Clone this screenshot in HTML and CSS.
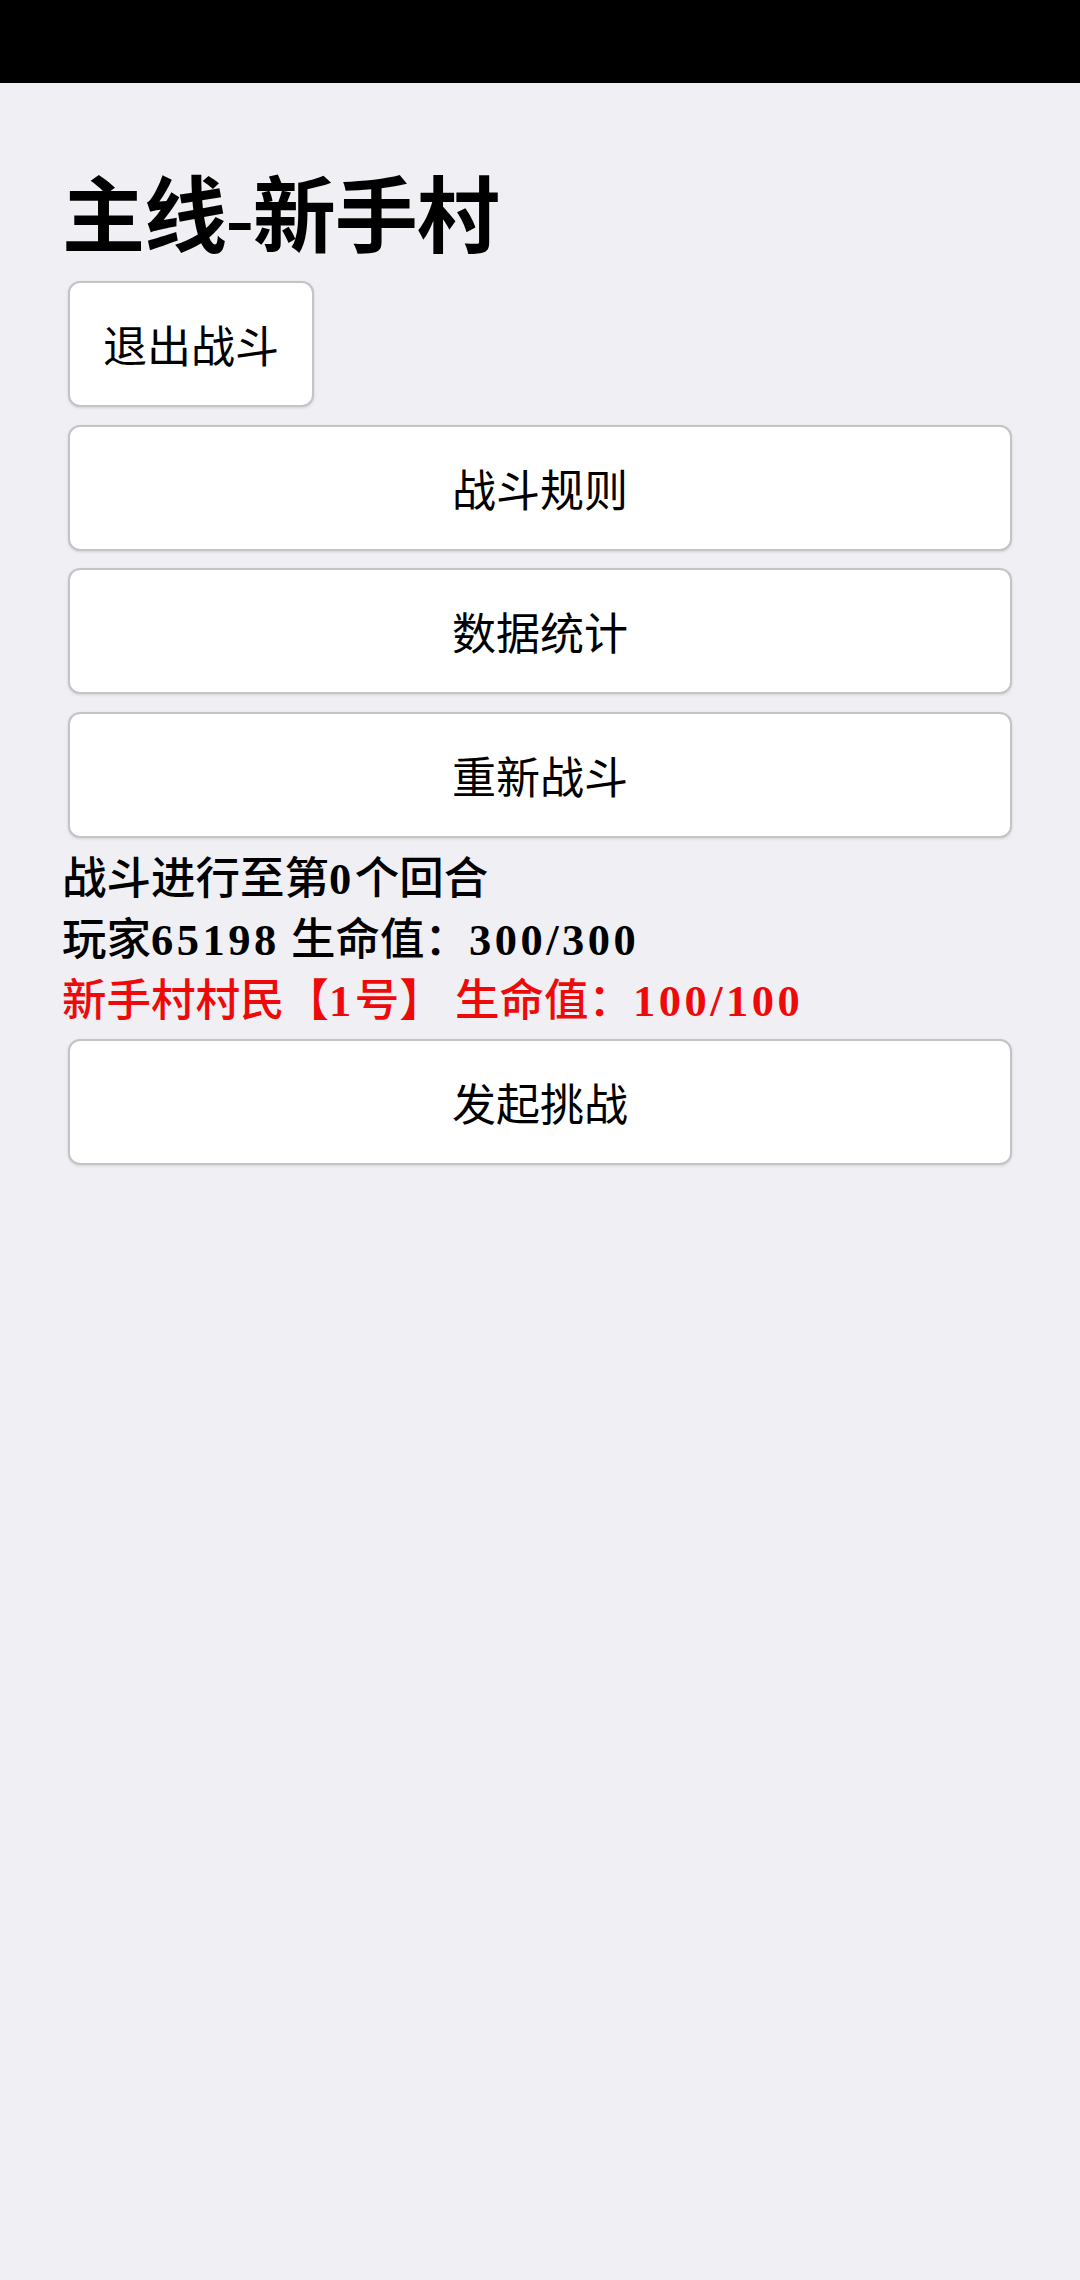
FILE: index.html
```html
<!DOCTYPE html>
<html lang="zh-CN">
<head>
<meta charset="utf-8">
<title>主线-新手村</title>
<link rel="stylesheet" href="styles.css">
</head>
<body>
<div class="statusbar"></div>
<main class="page">
  <h1 class="title">主线-新手村</h1>
  <div class="stack">
    <button class="btn btn-small">退出战斗</button>
    <button class="btn btn-wide">战斗规则</button>
    <button class="btn btn-wide">数据统计</button>
    <button class="btn btn-wide">重新战斗</button>
  </div>
  <div class="info">
    <div class="line">战斗进行至第<span class="num">0</span>个回合</div>
    <div class="line">玩家<span class="num">65198</span> 生命值：<span class="num">300/300</span></div>
    <div class="line enemy">新手村村民【<span class="num">1</span>号】 生命值：<span class="num">100/100</span></div>
  </div>
  <div class="stack">
    <button class="btn btn-wide">发起挑战</button>
  </div>
</main>
</body>
</html>
```

FILE: styles.css
```css
html, body {
  margin: 0;
  padding: 0;
  background: #efeff4;
}
body {
  width: 1080px;
  min-height: 2280px;
  font-family: "Liberation Serif", "Noto Sans CJK SC", serif;
  color: #000;
}
.statusbar {
  height: 83px;
  background: #000;
}
.page {
  padding: 0 62px;
}
.title {
  margin: 85px 0 0 0;
  font-size: 83px;
  line-height: 100px;
  font-weight: bold;
  letter-spacing: -1px;
}
.stack {
  display: flex;
  flex-direction: column;
  align-items: flex-start;
  gap: 17.5px;
  margin-top: 13px;
}
.btn {
  box-sizing: border-box;
  height: 126px;
  margin: 0 6px;
  padding: 0 32px;
  background: #fff;
  border: 2px solid #c4c4c6;
  border-radius: 12px;
  box-shadow: 0 1px 3px rgba(0, 0, 0, 0.12);
  font-family: "Liberation Serif", "Noto Sans CJK SC", serif;
  font-size: 44px;
  color: #000;
  text-align: center;
}
.btn-small {
  width: 246px;
}
.btn-wide {
  align-self: stretch;
}
.info {
  margin-top: 11px;
}
.line {
  font-size: 44.5px;
  line-height: 61px;
  font-weight: 500;
  white-space: nowrap;
}
.num {
  font-weight: 700;
  letter-spacing: 3.5px;
}
.enemy {
  color: #ee0a0a;
}
.info + .stack {
  margin-top: 7px;
}
```
